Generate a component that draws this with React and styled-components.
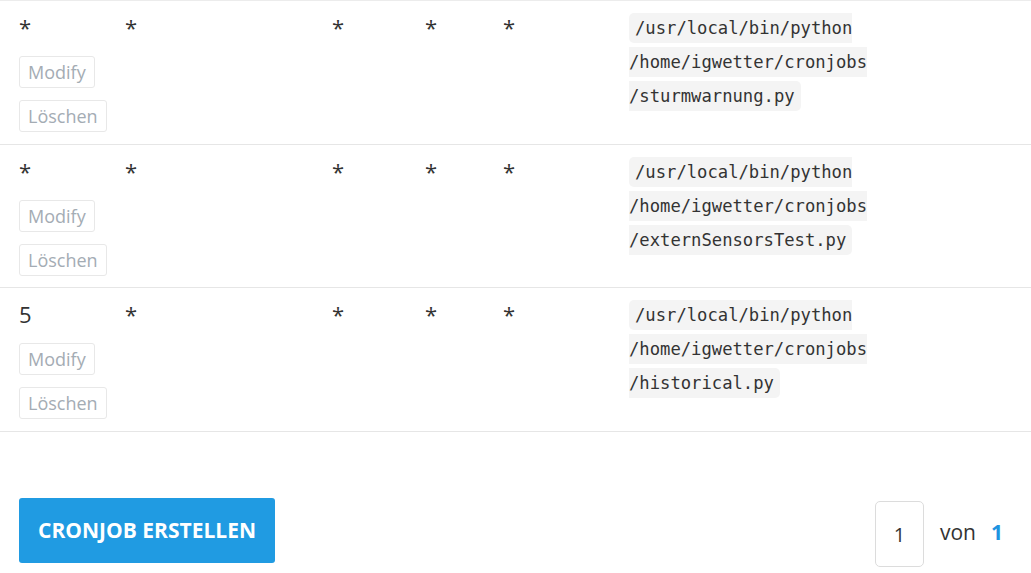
import React from "react";
import styled, { createGlobalStyle } from "styled-components";

const Global = createGlobalStyle`
  html, body { margin: 0; padding: 0; background: #fff; }
  body { font-family: "Open Sans", "Noto Sans", sans-serif; color: #333; }
`;

const Page = styled.div`
  width: 1031px;
`;

const Table = styled.div`
  border-top: 1px solid #ececec;
`;

const Row = styled.div`
  display: grid;
  grid-template-columns: 106px 207px 93px 78px 126px 245px 1fr;
  padding: 10px 0 11.6px 19px;
  border-bottom: 1px solid #e6e6e6;
  font-size: 18px;
  line-height: 33px;
  color: #333;
`;

const Cell = styled.div`
  display: flex;
  flex-direction: column;
  align-items: flex-start;
  gap: 12px;
`;

const Value = styled.span`
  display: block;
  height: 33px;
  font-size: 22px;
  line-height: 33px;
  color: #333;
`;

const Btn = styled.button`
  font-family: "Open Sans", sans-serif;
  font-size: 18px;
  line-height: 30px;
  height: 32px;
  padding: 0 8px;
  color: #a4acb4;
  background: #fff;
  border: 1px solid #e8e8e8;
  border-radius: 3px;
  cursor: pointer;
`;

const Code = styled.code`
  font-family: "DejaVu Sans Mono", "Liberation Mono", monospace;
  font-size: 17.2px;
  line-height: 33px;
  background: #f4f4f4;
  color: #333;
  padding: 5px 6px;
  border-radius: 5px;
  overflow-wrap: break-word;
`;

const CodeCell = styled.div`
  overflow-wrap: break-word;
  line-height: 33px;
`;

const Footer = styled.div`
  display: flex;
  justify-content: space-between;
  align-items: flex-start;
  padding: 66px 28px 0 19px;
`;

const Primary = styled.button`
  font-family: "Open Sans", sans-serif;
  font-weight: 700;
  font-size: 21px;
  text-transform: uppercase;
  color: #fff;
  background: #209be2;
  border: none;
  border-radius: 3px;
  height: 65px;
  width: 256px;
  padding: 0;
  cursor: pointer;
`;

const Pager = styled.div`
  display: flex;
  align-items: center;
  gap: 16px;
  margin-top: 3px;
  font-size: 21px;
  color: #333;
`;

const PageInput = styled.div`
  width: 47px;
  height: 62px;
  border: 1px solid #dcdcdc;
  border-radius: 5px;
  display: flex;
  align-items: center;
  justify-content: center;
  font-size: 20px;
  padding-top: 2px;
  box-sizing: content-box;
`;

const Von = styled.span`
  display: flex;
  gap: 15px;
  margin-top: -4px;
`;

const Total = styled.b`
  color: #1e93e0;
  font-weight: 700;
`;

const jobs = [
  { m: "*", h: "*", dom: "*", mon: "*", dow: "*", script: "sturmwarnung.py" },
  { m: "*", h: "*", dom: "*", mon: "*", dow: "*", script: "externSensorsTest.py" },
  { m: "5", h: "*", dom: "*", mon: "*", dow: "*", script: "historical.py" },
];

export default function App() {
  return (
    <Page>
      <Global />
      <Table>
        {jobs.map((j, i) => (
          <Row key={i}>
            <Cell>
              <Value>{j.m}</Value>
              <Btn>Modify</Btn>
              <Btn>Löschen</Btn>
            </Cell>
            <Cell><Value>{j.h}</Value></Cell>
            <Cell><Value>{j.dom}</Value></Cell>
            <Cell><Value>{j.mon}</Value></Cell>
            <Cell><Value>{j.dow}</Value></Cell>
            <CodeCell>
              <Code>/usr/local/bin/python /home/igwetter/cronjobs/{j.script}</Code>
            </CodeCell>
            <div />
          </Row>
        ))}
      </Table>
      <Footer>
        <Primary>Cronjob erstellen</Primary>
        <Pager>
          <PageInput>1</PageInput>
          <Von>
            <span>von</span>
            <Total>1</Total>
          </Von>
        </Pager>
      </Footer>
    </Page>
  );
}
